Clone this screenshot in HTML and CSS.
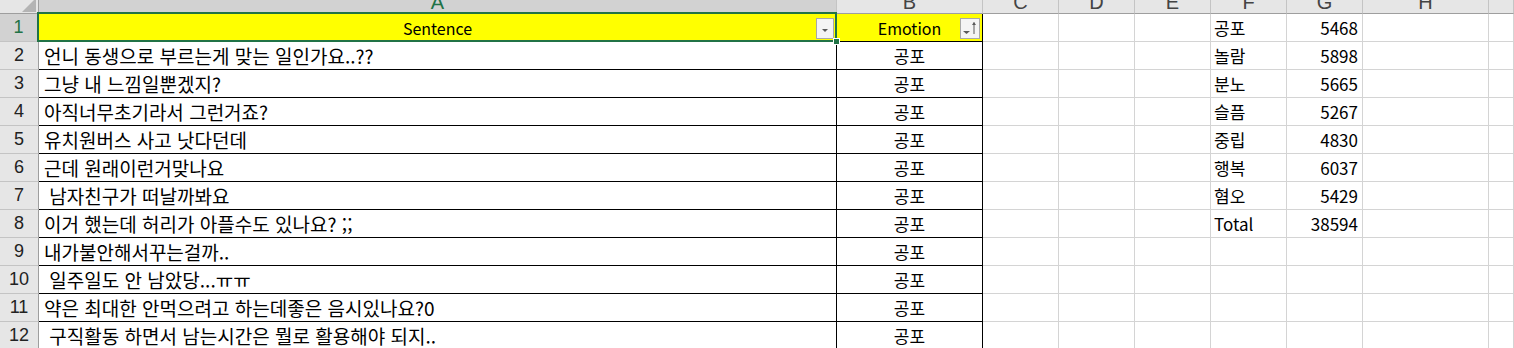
FILE: index.html
```html
<!DOCTYPE html>
<html lang="ko">
<head>
<meta charset="utf-8">
<title>Sheet</title>
<link rel="stylesheet" href="styles.css">
</head>
<body>
<div class="sheet">
  <!-- header row -->
  <div class="corner"><svg class="tri" width="14" height="14" viewBox="0 0 14 14"><polygon points="14,0 14,14 0,14" fill="#b4b4b4"/></svg></div>
  <div class="ch sel-ch"><span>A</span></div>
  <div class="ch"><span>B</span></div>
  <div class="ch"><span>C</span></div>
  <div class="ch"><span>D</span></div>
  <div class="ch"><span>E</span></div>
  <div class="ch"><span>F</span></div>
  <div class="ch"><span>G</span></div>
  <div class="ch"><span>H</span></div>
  <div class="ch"><span></span></div>

  <!-- row 1 -->
  <div class="rh sel-rh">1</div>
  <div class="d hdr a1"><span>Sentence</span><span class="fbtn"><svg width="18" height="21" viewBox="0 0 18 21"><polygon points="6,11 12,11 9,14" fill="#5a5a5a"/></svg></span></div>
  <div class="d hdr"><span>Emotion</span><span class="fbtn wide"><svg width="20" height="21" viewBox="0 0 20 21"><polygon points="3,13 10,13 6.5,16" fill="#5a5a5a"/><path d="M14 4.5 V16" stroke="#5a5a5a" stroke-width="1"/><polygon points="12,7 16,7 14,4" fill="#5a5a5a"/></svg></span></div>
  <div class="e"></div><div class="e"></div><div class="e"></div>
  <div class="e f">공포</div><div class="e g">5468</div><div class="e"></div><div class="e"></div>

  <div class="rh">2</div>
  <div class="d t">언니 동생으로 부르는게 맞는 일인가요..??</div><div class="d m">공포</div>
  <div class="e"></div><div class="e"></div><div class="e"></div>
  <div class="e f">놀람</div><div class="e g">5898</div><div class="e"></div><div class="e"></div>

  <div class="rh">3</div>
  <div class="d t">그냥 내 느낌일뿐겠지?</div><div class="d m">공포</div>
  <div class="e"></div><div class="e"></div><div class="e"></div>
  <div class="e f">분노</div><div class="e g">5665</div><div class="e"></div><div class="e"></div>

  <div class="rh">4</div>
  <div class="d t">아직너무초기라서 그런거죠?</div><div class="d m">공포</div>
  <div class="e"></div><div class="e"></div><div class="e"></div>
  <div class="e f">슬픔</div><div class="e g">5267</div><div class="e"></div><div class="e"></div>

  <div class="rh">5</div>
  <div class="d t">유치원버스 사고 낫다던데</div><div class="d m">공포</div>
  <div class="e"></div><div class="e"></div><div class="e"></div>
  <div class="e f">중립</div><div class="e g">4830</div><div class="e"></div><div class="e"></div>

  <div class="rh">6</div>
  <div class="d t">근데 원래이런거맞나요</div><div class="d m">공포</div>
  <div class="e"></div><div class="e"></div><div class="e"></div>
  <div class="e f">행복</div><div class="e g">6037</div><div class="e"></div><div class="e"></div>

  <div class="rh">7</div>
  <div class="d t"> 남자친구가 떠날까봐요</div><div class="d m">공포</div>
  <div class="e"></div><div class="e"></div><div class="e"></div>
  <div class="e f">혐오</div><div class="e g">5429</div><div class="e"></div><div class="e"></div>

  <div class="rh">8</div>
  <div class="d t">이거 했는데 허리가 아플수도 있나요? ;;</div><div class="d m">공포</div>
  <div class="e"></div><div class="e"></div><div class="e"></div>
  <div class="e f">Total</div><div class="e g">38594</div><div class="e"></div><div class="e"></div>

  <div class="rh">9</div>
  <div class="d t">내가불안해서꾸는걸까..</div><div class="d m">공포</div>
  <div class="e"></div><div class="e"></div><div class="e"></div>
  <div class="e"></div><div class="e"></div><div class="e"></div><div class="e"></div>

  <div class="rh">10</div>
  <div class="d t"> 일주일도 안 남았당...ㅠㅠ</div><div class="d m">공포</div>
  <div class="e"></div><div class="e"></div><div class="e"></div>
  <div class="e"></div><div class="e"></div><div class="e"></div><div class="e"></div>

  <div class="rh">11</div>
  <div class="d t">약은 최대한 안먹으려고 하는데좋은 음시있나요?0</div><div class="d m">공포</div>
  <div class="e"></div><div class="e"></div><div class="e"></div>
  <div class="e"></div><div class="e"></div><div class="e"></div><div class="e"></div>

  <div class="rh">12</div>
  <div class="d t"> 구직활동 하면서 남는시간은 뭘로 활용해야 되지..</div><div class="d m">공포</div>
  <div class="e"></div><div class="e"></div><div class="e"></div>
  <div class="e"></div><div class="e"></div><div class="e"></div><div class="e"></div>
</div>
</body>
</html>
```
FILE: styles.css
```css
html, body {
  margin: 0;
  padding: 0;
  background: #fff;
  overflow: hidden;
}
.sheet {
  display: grid;
  grid-template-columns: 39px 798px 146px 76px 76px 76px 76px 76px 126px 1fr;
  grid-template-rows: 14px;
  grid-auto-rows: 28px;
  width: 1514px;
  font-family: "Noto Sans CJK KR", "Noto Sans", sans-serif;
  font-size: 17px;
  color: #000;
}
.sheet > div {
  box-sizing: border-box;
  min-width: 0;
}
.corner {
  background: #e6e6e6;
  border-right: 1px solid #9e9e9e;
  border-bottom: 1px solid #9e9e9e;
  position: relative;
  overflow: hidden;
}
.corner .tri {
  position: absolute;
  right: 2px;
  bottom: 1px;
}
.ch {
  background: #e6e6e6;
  border-right: 1px solid #c4c4c4;
  border-bottom: 1px solid #9e9e9e;
  overflow: hidden;
  display: flex;
  justify-content: center;
  align-items: flex-end;
  font-family: "Liberation Sans", Arial, sans-serif;
  font-size: 20px;
  color: #444;
}
.ch span {
  display: block;
  line-height: 20px;
  margin-bottom: 1px;
}
.sel-ch {
  background: #d2d2d2;
  color: #217346;
  border-bottom: 2px solid #217346;
}
.sel-ch span {
  margin-bottom: 0;
}
.rh {
  background: #e6e6e6;
  border-right: 1px solid #9e9e9e;
  border-bottom: 1px solid #c4c4c4;
  display: flex;
  align-items: center;
  justify-content: center;
  font-family: "Liberation Sans", Arial, sans-serif;
  font-size: 18px;
  color: #222;
}
.sel-rh {
  background: #d2d2d2;
  color: #217346;
  border-right: 2px solid #217346;
}
.d {
  border-right: 1px solid #000;
  border-bottom: 1px solid #000;
  display: flex;
  align-items: center;
  white-space: pre;
  overflow: hidden;
  line-height: 22px;
}
.t {
  padding-left: 5px;
  font-size: 19px;
}
.m {
  justify-content: center;
}
.hdr {
  background: #ffff00;
  justify-content: center;
  position: relative;
  overflow: visible;
  white-space: nowrap;
  font-size: 16px;
}
.a1::after {
  content: "";
  position: absolute;
  left: -2px;
  top: -2px;
  right: -1px;
  bottom: -1px;
  border: 2px solid #217346;
  pointer-events: none;
}
.a1::before {
  content: "";
  position: absolute;
  right: -4px;
  bottom: -4px;
  width: 5px;
  height: 5px;
  background: #217346;
  border: 1px solid #fff;
  z-index: 2;
}
.fbtn {
  position: absolute;
  right: 2px;
  top: 4px;
  width: 18px;
  height: 21px;
  box-sizing: border-box;
  border: 1px solid #a8a8a8;
  background: #f4f4f4;
  display: block;
}
.fbtn.wide {
  width: 20px;
}
.fbtn svg {
  display: block;
  position: absolute;
  left: -1px;
  top: -1px;
}
.e {
  border-right: 1px solid #d4d4d4;
  border-bottom: 1px solid #d4d4d4;
  display: flex;
  align-items: center;
  white-space: pre;
  line-height: 20px;
}
.f {
  padding-left: 3px;
}
.g {
  justify-content: flex-end;
  padding-right: 4px;
}
```
